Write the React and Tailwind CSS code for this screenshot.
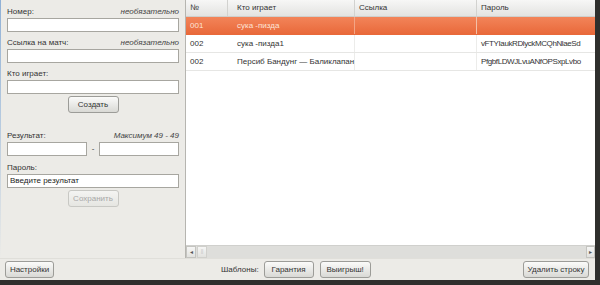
const rows = [
  { n: "001", who: "сука -пизда", link: "", pass: "", active: true },
  { n: "002", who: "сука -пизда1", link: "", pass: "vFTYIaukRDlyckMCQhNlaeSd" },
  { n: "002", who: "Персиб Бандунг — Баликлапан", link: "", pass: "PfgbfLDWJLvuANfOPSxpLvbo" },
];

function Btn({ children, className = "", disabled }) {
  return (
    <button
      className={`h-[17px] px-[3px] rounded-[3px] border bg-gradient-to-b leading-none whitespace-nowrap ${
        disabled
          ? "border-[#c8c8c4] from-[#f4f4f2] to-[#e6e6e2] text-[#a8a8a8]"
          : "border-[#9c9c98] from-[#fbfbfa] to-[#d9d9d5] text-[#333]"
      } ${className}`}
    >
      {children}
    </button>
  );
}

function Field({ value = "", className = "" }) {
  return (
    <div className={`h-[14px] bg-white border border-[#a7a6a0] px-[2px] leading-[12px] text-[#222] ${className}`}>
      {value}
    </div>
  );
}

function Label({ text, hint, className = "" }) {
  return (
    <div className={`h-[11px] flex justify-between items-center leading-none text-[#333] ${className}`}>
      <span>{text}</span>
      {hint && <span className="italic text-[#444]">{hint}</span>}
    </div>
  );
}

export default function App() {
  return (
    <div
      className="w-[600px] h-[285px] bg-[#2f2f2d] text-[8px] whitespace-nowrap"
      style={{ fontFamily: '"Liberation Sans", Arial, sans-serif' }}
    >
      <div className="w-[595px] h-[280px] bg-[#ecebe7] flex flex-col">
        <div className="flex h-[258px]">
          <div className="w-[1px] shrink-0 bg-gradient-to-b from-[#8fb0d6] via-[#b9cce0] to-[#ecebe7]" />
          {/* left form */}
          <div className="w-[184px] shrink-0 pl-[6px] pr-[6px] pt-[6px] flex flex-col">
            <Label text="Номер:" hint="необязательно" />
            <Field className="mt-[1px]" />
            <Label text="Ссылка на матч:" hint="необязательно" className="mt-[5px]" />
            <Field className="mt-[1px]" />
            <Label text="Кто играет:" className="mt-[5px]" />
            <Field className="mt-[1px]" />
            <div className="flex justify-center mt-[2px]">
              <Btn className="w-[51px]">Создать</Btn>
            </div>
            <Label text="Результат:" hint="Максимум 49 - 49" className="mt-[17px]" />
            <div className="flex items-center mt-[1px]">
              <Field className="w-[80px]" />
              <span className="w-[12px] text-center text-[#333]">-</span>
              <Field className="flex-1" />
            </div>
            <Label text="Пароль:" className="mt-[6px]" />
            <Field value="Введите результат" className="mt-[1px]" />
            <div className="flex justify-center mt-[2px]">
              <Btn disabled className="w-[51px]">Сохранить</Btn>
            </div>
          </div>
          {/* table */}
          <div className="flex-1 min-w-0 flex flex-col border-l border-[#b6b5b0] bg-white text-[#333]">
            <div className="flex h-[17px] bg-gradient-to-b from-[#f7f7f6] to-[#e3e3e1] border-b border-[#cfcfcc]">
              <div className="w-[42px] shrink-0 pl-[4px] flex items-center border-r border-[#d2d2cf]">№</div>
              <div className="w-[127px] shrink-0 pl-[9px] flex items-center border-r border-[#d2d2cf]">Кто играет</div>
              <div className="w-[122px] shrink-0 pl-[4px] flex items-center border-r border-[#d2d2cf]">Ссылка</div>
              <div className="flex-1 min-w-0 pl-[4px] flex items-center">Пароль</div>
            </div>
            {rows.map((r, i) => (
              <div
                key={i}
                className={`flex h-[18px] border-b ${
                  r.active
                    ? "bg-gradient-to-b from-[#f28459] to-[#e9693a] text-[#fde3d6] border-[#e9693a]"
                    : "border-[#e6e6e4]"
                }`}
              >
                <div className="w-[42px] shrink-0 pl-[4px] flex items-center">{r.n}</div>
                <div className={`w-[127px] shrink-0 pl-[9px] flex items-center border-r ${r.active ? "border-[#f3a585]" : "border-[#ececea]"}`}>{r.who}</div>
                <div className={`w-[122px] shrink-0 pl-[4px] flex items-center border-r ${r.active ? "border-[#f3c0a8]" : "border-[#ececea]"}`}>{r.link}</div>
                <div className="flex-1 min-w-0 pl-[4px] flex items-center tracking-[-0.4px]">{r.pass}</div>
              </div>
            ))}
            <div className="flex-1" />
            <div className="h-[13px] flex items-center bg-[#dededb] border-t border-[#d0d0cd]">
              <div className="w-[10px] h-[12px] flex items-center justify-center bg-gradient-to-b from-[#f6f6f5] to-[#e2e2df] border border-[#c4c4c0] text-[6px] text-[#555]">◂</div>
              <div className="w-[10px] h-[12px] ml-[1px] flex items-center justify-center bg-gradient-to-b from-[#f6f6f5] to-[#e2e2df] border border-[#d0d0cc] text-[5px] text-[#bbb]">||</div>
              <div className="flex-1" />
              <div className="w-[9px] h-[12px] flex items-center justify-center bg-gradient-to-b from-[#f6f6f5] to-[#e2e2df] border border-[#c4c4c0] text-[6px] text-[#555]">▸</div>
            </div>
          </div>
        </div>
        {/* bottom bar */}
        <div className="flex-1 flex items-center pl-[5px] pr-[6px] border-t border-[#e0dfda]">
          <Btn className="w-[49px]">Настройки</Btn>
          <div className="w-[167px]" />
          <span className="text-[#333]">Шаблоны:</span>
          <Btn className="w-[50px] ml-[5px]">Гарантия</Btn>
          <Btn className="w-[51px] ml-[6px]">Выигрыш!</Btn>
          <div className="flex-1" />
          <Btn className="w-[66px]">Удалить строку</Btn>
        </div>
      </div>
    </div>
  );
}
